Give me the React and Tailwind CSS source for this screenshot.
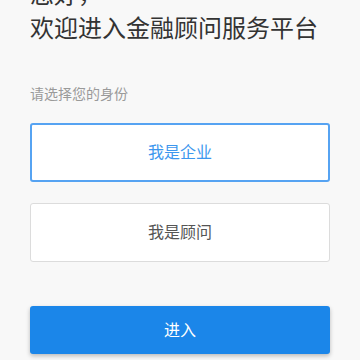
import React, { useState } from "react";

export default function App() {
  const [role, setRole] = useState("company");

  const cardClass = (active) =>
    `w-full h-[59px] pb-[3px] rounded-[3px] bg-white flex items-center justify-center text-[16px] ${
      active
        ? "border-2 border-[#56a3f2] text-[#3d97ee]"
        : "border border-[#dcdcdc] text-[#555555]"
    }`;

  return (
    <div
      className="min-h-[360px] bg-[#f8f8f8] px-[30px] overflow-hidden"
      style={{ fontFamily: '"Noto Sans CJK SC", "Noto Sans", sans-serif' }}
    >
      <div className="-mt-[24px] text-[24px] leading-[34px] text-[#333333]">
        <p>您好，</p>
        <p>欢迎进入金融顾问服务平台</p>
      </div>

      <p className="mt-[39px] text-[14px] leading-[20px] text-[#9a9a9a]">请选择您的身份</p>

      <div className="mt-[20px] flex flex-col gap-[21px]">
        <button className={cardClass(role === "company")} onClick={() => setRole("company")}>
          我是企业
        </button>
        <button className={cardClass(role === "advisor")} onClick={() => setRole("advisor")}>
          我是顾问
        </button>
      </div>

      <button className="mt-[44px] w-full h-[48px] pb-[2px] rounded-[3px] bg-[#1b86e9] text-white text-[16px] shadow-[0_2px_4px_rgba(0,0,0,0.25)]">
        进入
      </button>
    </div>
  );
}
